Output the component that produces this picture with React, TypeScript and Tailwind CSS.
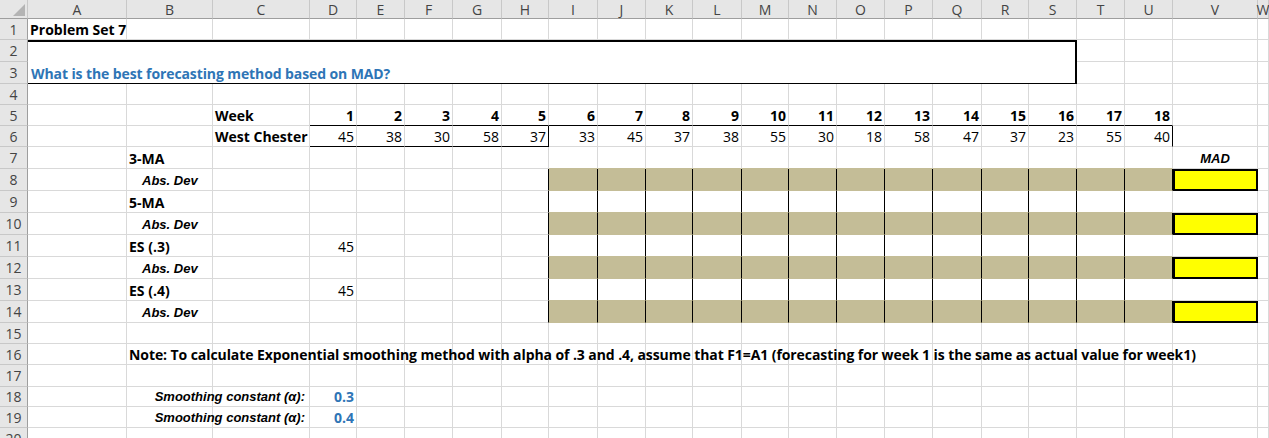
import React from "react";
import clsx from "clsx";

const LETTERS = "ABCDEFGHIJKLMNOPQRSTUVW".split("");
const SALES = [45, 38, 30, 58, 37, 33, 45, 37, 38, 55, 30, 18, 58, 47, 37, 23, 55, 40];

type Line = "grid" | "black" | "tan";

const RIGHT: Record<Line, string> = {
    grid: "border-r border-r-[#d9d9d9]",
    black: "border-r border-r-black",
    tan: "border-r border-r-[#c4bd97]",
};
const BOTTOM: Record<Line, string> = {
    grid: "border-b border-b-[#d9d9d9]",
    black: "border-b border-b-black",
    tan: "border-b border-b-[#c4bd97]",
};

const calibriBold = "font-bold";
const arialBoldItalic = "font-['Liberation_Sans',Arial,sans-serif] font-bold italic text-[13px]";
const blue = "text-[#2e75b6]";

interface Spec {
    text?: React.ReactNode;
    cls?: string;
    r: Line;
    b: Line;
    box?: boolean;
}

const LABELS: Record<number, [string, boolean]> = {
    7: ["3-MA", false],
    8: ["Abs. Dev", true],
    9: ["5-MA", false],
    10: ["Abs. Dev", true],
    11: ["ES (.3)", false],
    12: ["Abs. Dev", true],
    13: ["ES (.4)", false],
    14: ["Abs. Dev", true],
};

// one cell of the sheet: row is the excel row number, col 0 = A
function spec(row: number, col: number): Spec {
    const s: Spec = { r: "grid", b: "grid" };
    const week = col >= 3 && col <= 20;
    const band = col >= 8 && col <= 20;

    if (row === 1 && col === 0) {
        s.text = "Problem Set 7";
        s.cls = calibriBold;
    }

    if (row === 5) {
        if (col === 2) {
            s.text = "Week";
            s.cls = calibriBold;
        }
        if (week) {
            s.text = col - 2;
            s.cls = "font-bold justify-end";
            s.b = "black";
        }
    }

    if (row === 6) {
        if (col === 2) {
            s.text = "West Chester";
            s.cls = calibriBold;
        }
        if (week) {
            s.text = SALES[col - 3];
            s.cls = "justify-end";
        }
        if (col >= 3 && col <= 7) s.b = "black";
        if (col === 7 || col === 20) s.r = "black";
    }

    if (row >= 7 && row <= 14) {
        const label = LABELS[row];
        if (col === 1 && label) {
            s.text = label[0];
            s.cls = label[1] ? `${arialBoldItalic} pl-[15px]` : calibriBold;
        }
        if (col === 3 && (row === 11 || row === 13)) {
            s.text = 45;
            s.cls = "justify-end";
        }
        const even = row % 2 === 0;
        if (row >= 8 && col === 7) s.r = "black";
        if (row >= 8 && band && (col < 20 || even)) s.r = "black";
        if (band) {
            s.b = "tan";
            if (even) s.cls = "bg-[#c4bd97]";
        }
        if (col === 21) {
            if (row === 7) {
                s.text = "MAD";
                s.cls = `${arialBoldItalic} justify-center`;
            }
            if (even) s.box = true;
        }
    }

    if (row === 16 && col === 1) {
        s.text =
            "Note: To calculate Exponential smoothing method with alpha of .3 and .4, assume that F1=A1 (forecasting for week 1 is the same as actual value for week1)";
        s.cls = `${calibriBold} tracking-[-0.08px]`;
    }

    if ((row === 18 || row === 19) && col === 2) {
        s.text = "Smoothing constant (α):";
        s.cls = `${arialBoldItalic} justify-end pr-[4px]`;
    }
    if ((row === 18 || row === 19) && col === 3) {
        s.text = row === 18 ? "0.3" : "0.4";
        s.cls = `font-bold ${blue} justify-end`;
    }

    return s;
}

const Cell = ({ s }: { s: Spec }) => (
    <div
        className={clsx(
            "flex items-end whitespace-nowrap leading-[16px] pb-[1px] px-[2px] min-w-0",
            s.box ? "border-2 border-black bg-[#ffff00]" : [RIGHT[s.r], BOTTOM[s.b]],
            s.cls
        )}
    >
        {s.text !== undefined && <span className="relative z-10">{s.text}</span>}
    </div>
);

const RowHead = ({ n }: { n: number }) => (
    <div className="flex items-center justify-center bg-[#e6e6e6] border-r border-r-[#9e9e9e] border-b border-b-[#c8c8c8] text-[#444] text-[14px]">
        {n}
    </div>
);

export default function App() {
    const rows: React.ReactNode[] = [];

    // column headers
    rows.push(
        <div key="corner" className="relative bg-[#e6e6e6] border-r border-r-[#c8c8c8] border-b border-b-[#9e9e9e]">
            <svg className="absolute inset-0" width="28" height="19" viewBox="0 0 28 19">
                <polygon points="13,16 25,16 25,4" fill="#b4b4b4" />
            </svg>
        </div>
    );
    LETTERS.forEach((l) =>
        rows.push(
            <div
                key={`h${l}`}
                className="flex items-center justify-center bg-[#e6e6e6] border-r border-r-[#c8c8c8] border-b border-b-[#9e9e9e] text-[#444] text-[14px]"
            >
                {l}
            </div>
        )
    );

    for (let row = 1; row <= 20; row++) {
        rows.push(<RowHead key={`r${row}`} n={row} />);
        if (row === 2) {
            rows.push(
                <div
                    key="merged"
                    className="col-span-19 row-span-2 flex items-end pl-[3px] pb-[1px] leading-[16px] whitespace-nowrap border-t-2 border-t-black border-r-2 border-r-black border-b border-b-black"
                >
                    <span className={`font-bold ${blue} tracking-[-0.1px]`}>What is the best forecasting method based on MAD?</span>
                </div>
            );
        }
        LETTERS.forEach((_, col) => {
            if ((row === 2 || row === 3) && col <= 18) return;
            rows.push(<Cell key={`c${row}-${col}`} s={spec(row, col)} />);
        });
    }

    return (
        <div className="w-[1269px] h-[438px] overflow-hidden bg-white text-black text-[14px] font-['Open_Sans',sans-serif]">
            <div className="grid grid-cols-[28px_99px_86px_97px_47px_48px_48px_49px_47px_49px_48px_47px_49px_47px_48px_48px_48px_49px_47px_48px_48px_48px_85px_11px] grid-rows-[19px_21px_22px_22px_21px_21px_21px_22px_22px_22px_22px_22px_22px_22px_22px_21px_21px_22px_20px_21px_21px]">
                {rows}
            </div>
        </div>
    );
}
